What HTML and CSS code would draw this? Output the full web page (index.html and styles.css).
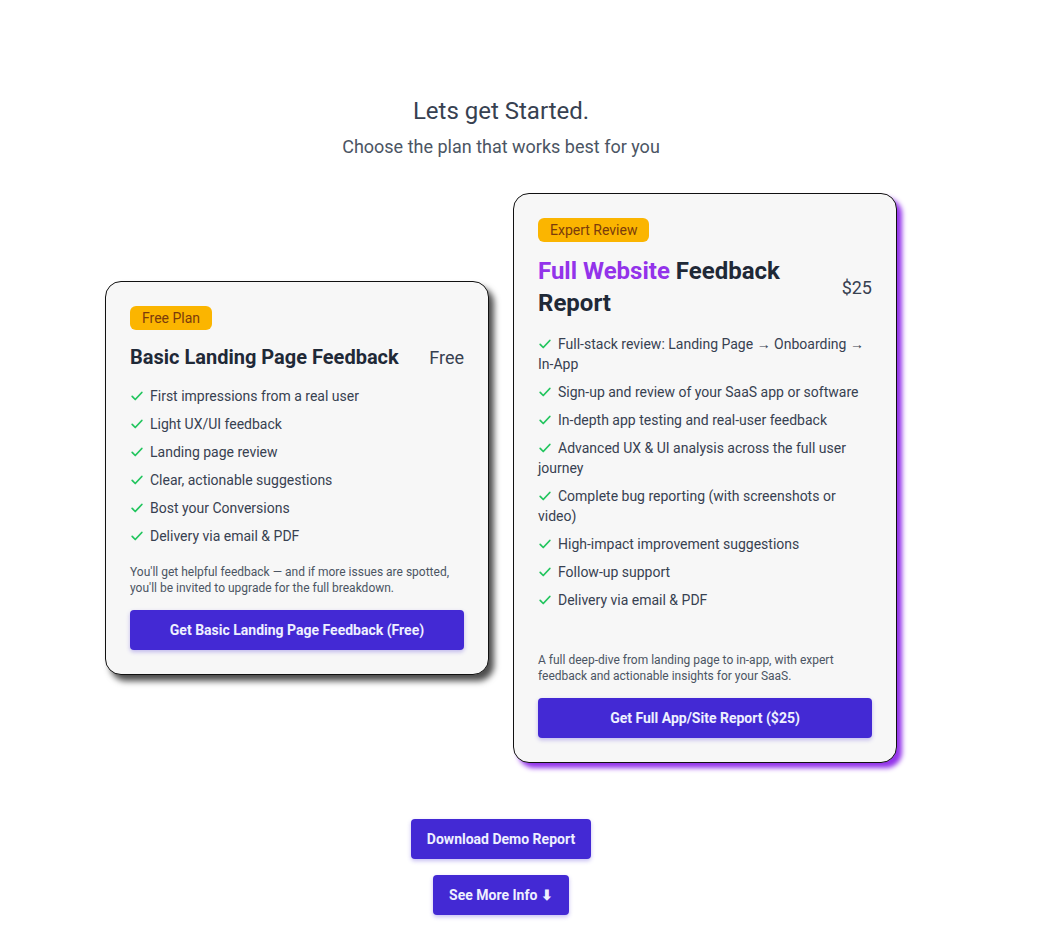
FILE: index.html
```html
<!DOCTYPE html>
<html lang="en">
<head>
    <meta charset="UTF-8">
    <meta name="viewport" content="width=device-width, initial-scale=1.0">
    <title>Pricing</title>
    <link rel="stylesheet" href="styles.css">
</head>
<body>
    <main class="page">
        <header class="intro">
            <h1>Lets get Started.</h1>
            <p>Choose the plan that works best for you</p>
        </header>

        <section class="plans">
            <div class="card card-basic">
                <span class="badge">Free Plan</span>
                <div class="card-head">
                    <h2>Basic Landing Page Feedback</h2>
                    <span class="price">Free</span>
                </div>
                <ul class="features">
                    <li><svg class="check" viewBox="0 0 16 16"><path d="M2.5 8.5l3.5 3.5 7.5-8"/></svg>First impressions from a real user</li>
                    <li><svg class="check" viewBox="0 0 16 16"><path d="M2.5 8.5l3.5 3.5 7.5-8"/></svg>Light UX/UI feedback</li>
                    <li><svg class="check" viewBox="0 0 16 16"><path d="M2.5 8.5l3.5 3.5 7.5-8"/></svg>Landing page review</li>
                    <li><svg class="check" viewBox="0 0 16 16"><path d="M2.5 8.5l3.5 3.5 7.5-8"/></svg>Clear, actionable suggestions</li>
                    <li><svg class="check" viewBox="0 0 16 16"><path d="M2.5 8.5l3.5 3.5 7.5-8"/></svg>Bost your Conversions</li>
                    <li><svg class="check" viewBox="0 0 16 16"><path d="M2.5 8.5l3.5 3.5 7.5-8"/></svg>Delivery via email &amp; PDF</li>
                </ul>
                <p class="note">You'll get helpful feedback — and if more issues are spotted, you'll be invited to upgrade for the full breakdown.</p>
                <button class="btn btn-wide">Get Basic Landing Page Feedback (Free)</button>
            </div>

            <div class="card card-full">
                <span class="badge">Expert Review</span>
                <div class="card-head">
                    <h2 class="big"><span class="accent">Full Website</span> Feedback Report</h2>
                    <span class="price">$25</span>
                </div>
                <ul class="features">
                    <li><svg class="check" viewBox="0 0 16 16"><path d="M2.5 8.5l3.5 3.5 7.5-8"/></svg>Full-stack review: Landing Page → Onboarding → In-App</li>
                    <li><svg class="check" viewBox="0 0 16 16"><path d="M2.5 8.5l3.5 3.5 7.5-8"/></svg>Sign-up and review of your SaaS app or software</li>
                    <li><svg class="check" viewBox="0 0 16 16"><path d="M2.5 8.5l3.5 3.5 7.5-8"/></svg>In-depth app testing and real-user feedback</li>
                    <li><svg class="check" viewBox="0 0 16 16"><path d="M2.5 8.5l3.5 3.5 7.5-8"/></svg>Advanced UX &amp; UI analysis across the full user journey</li>
                    <li><svg class="check" viewBox="0 0 16 16"><path d="M2.5 8.5l3.5 3.5 7.5-8"/></svg>Complete bug reporting (with screenshots or video)</li>
                    <li><svg class="check" viewBox="0 0 16 16"><path d="M2.5 8.5l3.5 3.5 7.5-8"/></svg>High-impact improvement suggestions</li>
                    <li><svg class="check" viewBox="0 0 16 16"><path d="M2.5 8.5l3.5 3.5 7.5-8"/></svg>Follow-up support</li>
                    <li><svg class="check" viewBox="0 0 16 16"><path d="M2.5 8.5l3.5 3.5 7.5-8"/></svg>Delivery via email &amp; PDF</li>
                </ul>
                <p class="note">A full deep-dive from landing page to in-app, with expert feedback and actionable insights for your SaaS.</p>
                <button class="btn btn-wide">Get Full App/Site Report ($25)</button>
            </div>
        </section>

        <div class="extra">
            <button class="btn">Download Demo Report</button>
            <button class="btn">See More Info ⬇</button>
        </div>
    </main>
</body>
</html>
```

FILE: styles.css
```css
body {
    margin: 0;
    font-family: Roboto, "Noto Sans", Arial, sans-serif;
    background-color: #fff;
    color: #1f2937;
}

.page {
    width: 1002px;
    padding: 95px 0 40px;
    display: flex;
    flex-direction: column;
    align-items: center;
}

.intro {
    text-align: center;
}

.intro h1 {
    margin: 0;
    font-size: 24px;
    line-height: 32px;
    font-weight: 400;
    color: #374151;
}

.intro p {
    margin: 6px 0 0;
    font-size: 18px;
    line-height: 28px;
    color: #4b5563;
}

.plans {
    margin-top: 32px;
    display: flex;
    align-items: center;
    gap: 24px;
}

.card {
    width: 384px;
    box-sizing: border-box;
    padding: 24px;
    background-color: #f7f7f7;
    border: 1px solid #111;
    border-radius: 16px;
}

.card-basic {
    box-shadow: 5px 6px 6px rgba(0, 0, 0, 0.7);
}

.card-full {
    box-shadow: 5px 5px 5px #9333ea;
}

.badge {
    display: inline-block;
    padding: 0 12px;
    height: 24px;
    line-height: 24px;
    font-size: 14px;
    border-radius: 6px;
    background-color: #fbb500;
    color: #7a3b0c;
}

.card-head {
    display: flex;
    align-items: center;
    justify-content: space-between;
    margin-top: 13px;
}

.card-head h2 {
    margin: 0;
    font-size: 20px;
    line-height: 28px;
    font-weight: 700;
    color: #1f2937;
}

.card-head h2.big {
    font-size: 24px;
    line-height: 32px;
    max-width: 270px;
}

.accent {
    color: #9333ea;
}

.price {
    font-size: 18px;
    color: #374151;
}

.features {
    list-style: none;
    margin: 15px 0 0;
    padding: 0;
}

.features li {
    font-size: 14px;
    line-height: 20px;
    margin-bottom: 8px;
    color: #374151;
}

.check {
    width: 14px;
    height: 14px;
    margin-right: 6px;
    vertical-align: -2px;
    fill: none;
    stroke: #22c55e;
    stroke-width: 2;
    stroke-linecap: round;
    stroke-linejoin: round;
}

.note {
    margin: 18px 0 0;
    font-size: 12px;
    line-height: 16px;
    color: #4b5563;
}

.card-full .note {
    margin-top: 42px;
}

.btn {
    height: 40px;
    padding: 0 16px;
    border: none;
    border-radius: 4px;
    background-color: #4329d4;
    color: #eef0ff;
    font-family: inherit;
    font-size: 14px;
    font-weight: 700;
    box-shadow: 0 2px 4px rgba(67, 41, 212, 0.3);
    cursor: pointer;
}

.btn-wide {
    width: 100%;
    margin-top: 14px;
}

.extra {
    margin-top: 56px;
    display: flex;
    flex-direction: column;
    align-items: center;
    gap: 16px;
}
```
